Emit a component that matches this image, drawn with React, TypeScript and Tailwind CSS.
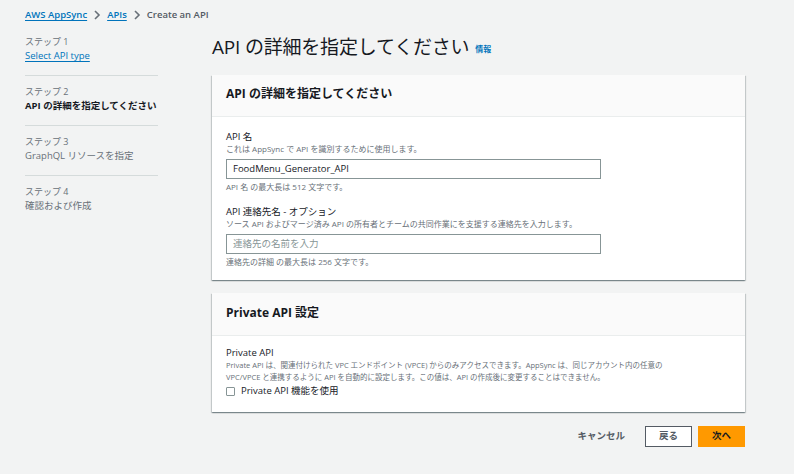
import React from "react";

const font = { fontFamily: '"Open Sans", "Noto Sans CJK JP", sans-serif' };

function Chevron() {
  return (
    <svg width="8" height="10" viewBox="0 0 8 10" className="mx-[6px]">
      <path d="M2 1 L6 5 L2 9" fill="none" stroke="#687078" strokeWidth="1.6" />
    </svg>
  );
}

function Step({ n, children, first }: { n: number; children: React.ReactNode; first?: boolean }) {
  return (
    <div className={first ? "pt-[7px] pb-[12px]" : "border-t border-[#d5dbdb] pt-[9px] pb-[12px]"}>
      <div className="text-[9px] leading-[14px] text-[#687078]">ステップ {n}</div>
      <div className="text-[9.5px] leading-[14px]">{children}</div>
    </div>
  );
}

const cardShadow =
  "bg-white shadow-[0_1px_1px_0_rgba(0,28,36,0.3),1px_1px_1px_0_rgba(0,28,36,0.15),-1px_1px_1px_0_rgba(0,28,36,0.15)]";

export default function App() {
  return (
    <div style={font} className="w-[794px] h-[474px] bg-[#f2f3f3] text-[#16191f] overflow-hidden">
      {/* breadcrumb */}
      <div className="flex items-center h-[14px] mt-[8px] pl-[25px] text-[9.5px] font-semibold">
        <span className="text-[#0073bb] underline underline-offset-2">AWS AppSync</span>
        <Chevron />
        <span className="text-[#0073bb] underline underline-offset-2">APIs</span>
        <Chevron />
        <span className="text-[#545b64]">Create an API</span>
      </div>

      <div className="flex pl-[25px] mt-[6px]">
        {/* side nav */}
        <div className="w-[133px] mr-[54px]">
          <Step n={1} first>
            <span className="text-[#0073bb] underline underline-offset-2">Select API type</span>
          </Step>
          <Step n={2}>
            <span className="font-bold">API の詳細を指定してください</span>
          </Step>
          <Step n={3}>
            <span className="text-[#687078]">GraphQL リソースを指定</span>
          </Step>
          <Step n={4}>
            <span className="text-[#687078]">確認および作成</span>
          </Step>
        </div>

        {/* main */}
        <div className="w-[533px]">
          <div className="flex items-end h-[28px] mt-[5px] mb-[14px]">
            <h1 className="text-[19px] leading-[28px] font-normal tracking-[-0.2px]">API の詳細を指定してください</h1>
            <span className="ml-[6px] mb-[6px] text-[8px] font-bold text-[#0073bb]">情報</span>
          </div>

          {/* card 1 */}
          <div className={cardShadow}>
            <div className="h-[42px] bg-[#fafafa] border-b border-[#eaeded] flex items-center px-[14px]">
              <h2 className="text-[12px] font-bold leading-[16px] -mt-[3px]">API の詳細を指定してください</h2>
            </div>
            <div className="px-[14px] pt-[13px] pb-[12px]">
              <div className="text-[9.5px] leading-[13px]">API 名</div>
              <div className="text-[8px] leading-[12px] text-[#687078]">これは AppSync で API を識別するために使用します。</div>
              <div className="mt-[4px] w-[375px] h-[20px] border border-[#879596] flex items-center px-[6px] text-[9.5px]">
                FoodMenu_Generator_API
              </div>
              <div className="mt-[2px] text-[8px] leading-[12px] text-[#687078]">API 名 の最大長は 512 文字です。</div>

              <div className="mt-[12px] text-[9.5px] leading-[13px]">API 連絡先名 - オプション</div>
              <div className="text-[8px] leading-[12px] text-[#687078]">
                ソース API およびマージ済み API の所有者とチームの共同作業にを支援する連絡先を入力します。
              </div>
              <div className="mt-[4px] w-[375px] h-[20px] border border-[#879596] flex items-center px-[6px] text-[9.5px] text-[#879596]">
                連絡先の名前を入力
              </div>
              <div className="mt-[2px] text-[8px] leading-[12px] text-[#687078]">連絡先の詳細 の最大長は 256 文字です。</div>
            </div>
          </div>

          {/* card 2 */}
          <div className={`mt-[13px] ${cardShadow}`}>
            <div className="h-[43px] bg-[#fafafa] border-b border-[#eaeded] flex items-center px-[14px]">
              <h2 className="text-[12px] font-bold leading-[16px] -mt-[3px]">Private API 設定</h2>
            </div>
            <div className="px-[14px] pt-[10px] pb-[15px]">
              <div className="text-[9.5px] leading-[13px]">Private API</div>
              <div className="text-[7.5px] leading-[12px] text-[#687078]">
                Private API は、関連付けられた VPC エンドポイント (VPCE) からのみアクセスできます。AppSync は、同じアカウント内の任意の
                <br />
                VPC/VPCE と連携するように API を自動的に設定します。この値は、API の作成後に変更することはできません。
              </div>
              <div className="flex items-center h-[12px] mt-[2px]">
                <span className="w-[9px] h-[9px] border border-[#879596] bg-white rounded-[1px]" />
                <span className="ml-[6px] text-[9.5px]">Private API 機能を使用</span>
              </div>
            </div>
          </div>

          {/* footer */}
          <div className="flex items-center justify-end mt-[14px]">
            <span className="text-[9.5px] font-bold text-[#545b64] mr-[20px]">キャンセル</span>
            <div className="w-[47px] h-[21px] border border-[#545b64] bg-white flex items-center justify-center text-[9.5px] font-bold text-[#545b64]">
              戻る
            </div>
            <div className="ml-[6px] w-[47px] h-[21px] bg-[#ff9900] flex items-center justify-center text-[9.5px] font-bold text-[#16191f]">
              次へ
            </div>
          </div>
        </div>
      </div>
    </div>
  );
}
